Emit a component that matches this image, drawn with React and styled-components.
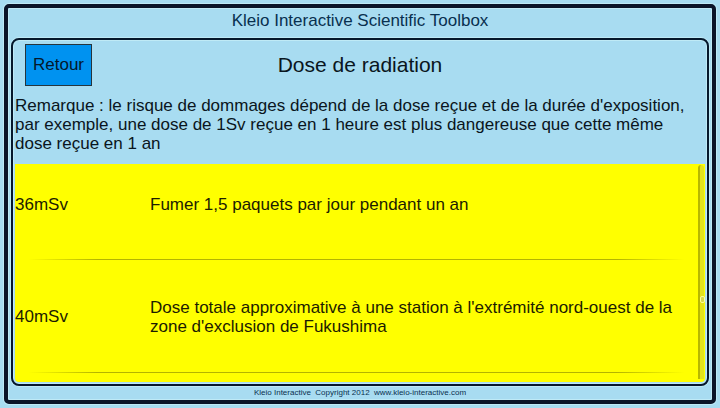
import React from "react";
import styled, { createGlobalStyle } from "styled-components";

const GlobalStyle = createGlobalStyle`
  * { box-sizing: border-box; }
  body {
    margin: 0;
    background: #a8dcf1;
    color: #0a1520;
    font-family: "Liberation Sans", Arial, sans-serif;
  }
`;

const Page = styled.div`
  display: flex;
  height: 100vh;
  padding: 4px;
`;

const Frame = styled.div`
  flex: 1;
  min-width: 0;
  display: flex;
  flex-direction: column;
  padding: 0 3px;
  border: 4px solid #0b1428;
  border-radius: 5px;
  box-shadow: 0 0 0 1px #bfeaf6, inset 0 0 0 1px #bfeaf6;
`;

const AppTitle = styled.header`
  height: 30px;
  line-height: 25px;
  font-size: 17px;
  text-align: center;
  color: #08304f;
`;

const Panel = styled.main`
  flex: 1;
  min-height: 0;
  display: flex;
  flex-direction: column;
  padding: 0 2px 2px;
  border: 2px solid #06182c;
  border-radius: 8px;
  box-shadow: 0 0 0 1px #bfeaf6, inset 0 0 0 1px #bfeaf6;
`;

const Toolbar = styled.div`
  display: grid;
  grid-template-columns: 67px 1fr 67px;
  align-items: center;
  padding: 4px 10px 0;
`;

const BackButton = styled.button`
  height: 42px;
  padding: 0;
  border: 1px solid #26353d;
  background: #0092f0;
  color: #04182c;
  font-family: inherit;
  font-size: 17px;
`;

const Heading = styled.h1`
  margin: 0;
  font-size: 21px;
  font-weight: 400;
  line-height: 24px;
  text-align: center;
`;

const Remark = styled.p`
  margin: 0;
  padding: 10px 16px 11px 0;
  font-size: 17px;
  line-height: 19px;
`;

const ListArea = styled.section`
  flex: 1;
  min-height: 0;
  display: flex;
  background: #ffff00;
  color: #1c1c00;
  border-radius: 0 0 4px 4px;
`;

const DoseTable = styled.table`
  flex: 1;
  display: block;
  min-width: 0;
  overflow: hidden;
  font-size: 17px;
  line-height: 19px;
`;

const DoseBody = styled.tbody`
  display: block;
`;

const DoseRow = styled.tr`
  display: grid;
  grid-template-columns: 135px 1fr;
  align-items: center;
  height: ${(p) => (p.$first ? 96 : 113)}px;
  padding-bottom: ${(p) => (p.$first ? 15 : 0)}px;
  background: linear-gradient(90deg, transparent 2%, #b4b400 12%, #b4b400 88%, transparent 98%) bottom / 100% 1px no-repeat;
`;

const Dose = styled.th`
  padding: 0;
  font-weight: 400;
  text-align: left;
`;

const Description = styled.td`
  padding: 0;
`;

const Track = styled.div`
  width: 6px;
  margin: 1px 1px 3px 0;
  display: flex;
  flex-direction: column;
  align-items: center;
  justify-content: center;
  padding-top: 54px;
  border-left: 2px solid #b7b700;
  border-radius: 3px 3px 0 0;
  background: #e3e31c;
`;

const Thumb = styled.div`
  flex: none;
  width: 5px;
  height: 7px;
  border: 1px solid #ffff9a;
  border-radius: 2px;
  background: #d8d84a;
`;

const Footer = styled.footer`
  height: 14px;
  line-height: 14px;
  font-size: 8px;
  text-align: center;
  white-space: pre;
  color: #08304f;
`;

const doses = [
  { dose: "36mSv", text: "Fumer 1,5 paquets par jour pendant un an" },
  {
    dose: "40mSv",
    text: "Dose totale approximative à une station à l'extrémité nord-ouest de la zone d'exclusion de Fukushima",
  },
];

export default function App() {
  return (
    <Page>
      <GlobalStyle />
      <Frame>
        <AppTitle>Kleio Interactive Scientific Toolbox</AppTitle>
        <Panel>
          <Toolbar>
            <BackButton type="button">Retour</BackButton>
            <Heading>Dose de radiation</Heading>
          </Toolbar>
          <Remark>
            Remarque : le risque de dommages dépend de la dose reçue et de la durée
            d'exposition, par exemple, une dose de 1Sv reçue en 1 heure est plus
            dangereuse que cette même dose reçue en 1 an
          </Remark>
          <ListArea>
            <DoseTable>
              <DoseBody>
                {doses.map((d, i) => (
                  <DoseRow key={d.dose} $first={i === 0}>
                    <Dose scope="row">{d.dose}</Dose>
                    <Description>{d.text}</Description>
                  </DoseRow>
                ))}
              </DoseBody>
            </DoseTable>
            <Track>
              <Thumb />
            </Track>
          </ListArea>
        </Panel>
        <Footer>{"Kleio Interactive  Copyright 2012  www.kleio-interactive.com"}</Footer>
      </Frame>
    </Page>
  );
}
